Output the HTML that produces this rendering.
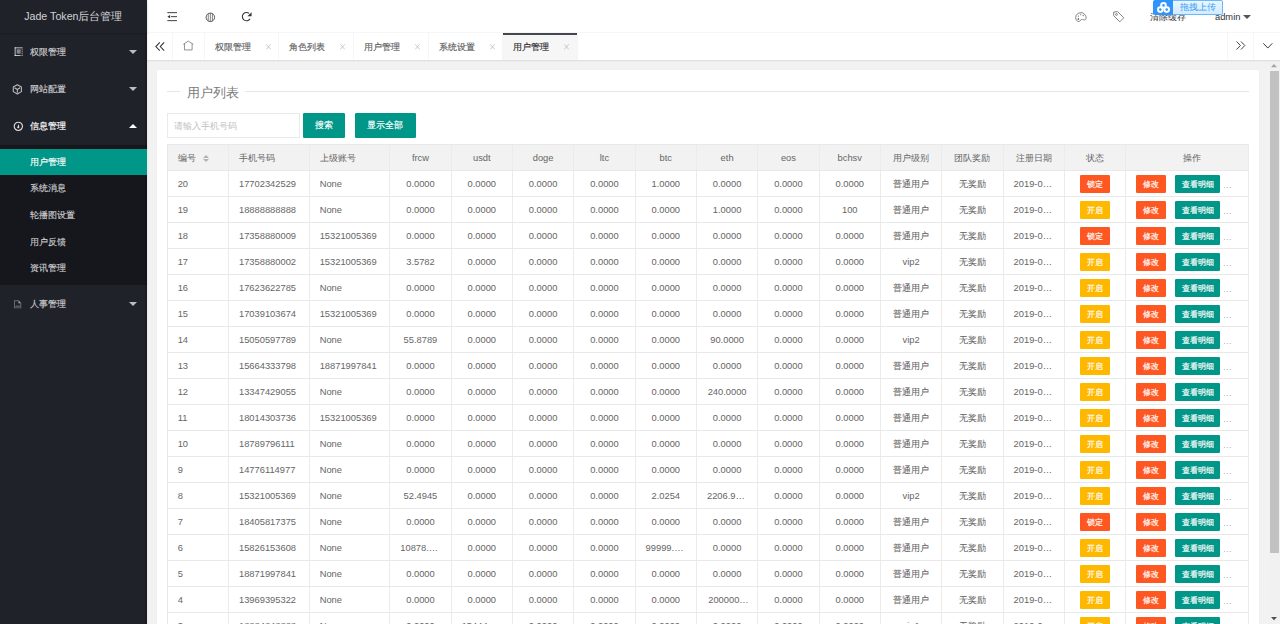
<!DOCTYPE html>
<html><head><meta charset="utf-8"><title>Jade Token后台管理</title>
<style>
html,body{margin:0;padding:0;overflow:hidden;background:#f2f2f2;width:1280px;height:624px}
#app{position:relative;width:1920px;height:936px;zoom:0.6666667;font-family:"Liberation Sans",sans-serif;font-size:14px;color:#666;overflow:hidden;background:#f2f2f2}
*{box-sizing:border-box}
svg{display:block;overflow:visible}
.nav,.ttl li,.lbtn,.btn,.cj{-webkit-text-stroke:0.25px currentColor}
td .cj{-webkit-text-stroke:0.12px currentColor}
.side{position:absolute;left:0;top:0;width:220px;height:936px;background:#20222A;box-shadow:1px 0 2px 0 rgba(0,0,0,.05);z-index:10}
.logo{position:absolute;left:0;top:0;width:220px;height:50px;line-height:50px;text-align:center;color:rgba(255,255,255,.8);font-size:16px;box-shadow:0 1px 2px 0 rgba(0,0,0,.15);background:#20222A;z-index:2}
.nav{position:absolute;left:0;top:50px;width:220px}
.nav .it{position:relative;display:block;height:56px;line-height:40px;padding:8px 30px 8px 45px;color:rgba(255,255,255,.7);white-space:nowrap}
.nav .it.on{color:#fff}
.nav .ic{position:absolute;left:0;top:0;width:16px;height:16px}
.nav .more{position:absolute;right:15px;top:25px;width:0;height:0;border-left:6px solid transparent;border-right:6px solid transparent;border-top:6px solid rgba(255,255,255,.7)}
.nav .it.on .more{border-top:none;border-bottom:6px solid #fff;top:24.5px}
.child{padding:5px 0;background:rgba(0,0,0,.3)}
.child a{display:block;height:40px;line-height:40px;padding-left:45px;color:rgba(255,255,255,.7)}
.child a.sel{background:#009688;color:#fff}
.header{position:absolute;left:220px;top:0;right:0;height:50px;background:#fff;border-bottom:1px solid #f6f6f6}
.hi{position:absolute}
.htxt{position:absolute;top:1.5px;line-height:50px;color:#333;white-space:nowrap}
.caret{position:absolute;left:1645px;top:22px;width:0;height:0;border-left:6px solid transparent;border-right:6px solid transparent;border-top:6px solid #555}
.tabs{position:absolute;left:220px;top:50px;right:0;height:40px;background:#fff;box-shadow:0 1px 2px 0 rgba(0,0,0,.1);z-index:5}
.tctl{position:absolute;top:0;width:40px;height:40px;border-left:1px solid #f6f6f6}
.ttl{position:absolute;left:40px;top:0;height:40px;white-space:nowrap;font-size:0;margin:0;padding:0}
.ttl li{display:inline-block;position:relative;vertical-align:top;width:112px;height:40px;line-height:40px;padding:1.4px 0 0 15px;border-right:1px solid #f6f6f6;font-size:14px;color:#666;list-style:none}
.ttl li.home{width:47px}
.ttl li.act{background:#f6f6f6;color:#333}
.ttl li.act:after{content:'';position:absolute;left:0;top:0;width:100%;height:2px;background:#45474e}
.ttl li .x{position:absolute;left:91.5px;top:16.2px;width:7.5px;height:8.5px}
.body{position:absolute;left:220px;top:90px;right:0;bottom:0;background:#f2f2f2}
.sb{position:absolute;right:0;top:0;width:17px;bottom:0;background:#f1f1f1}
.thumb{position:absolute;left:2.3px;width:13px;top:16.5px;height:723.5px;background:#c1c1c1}
.card{position:absolute;left:15px;top:15px;width:1653px;height:900px;background:#fff;border-radius:2px;box-shadow:0 1px 2px 0 rgba(0,0,0,.05)}
.cbody{padding:10px 15px}
fieldset.ft{margin:10px 0 20px;padding:0;border:none;border-top:1px solid #e6e6e6}
fieldset.ft legend{margin-left:20px;padding:0 10px;font-size:20px;line-height:24px;font-weight:300;color:#7a7a7a}
.form{height:38px;font-size:0;white-space:nowrap}
.inp{display:inline-block;vertical-align:top;width:200px;height:38px;border:1px solid #eaeaea;background:#fff;font-size:14px;line-height:36px;padding-left:10px;color:#c2c2c2}
.lbtn{display:inline-block;vertical-align:top;height:38px;line-height:38px;padding:1px 0 0;text-align:center;background:#009688;color:#fff;font-size:14px;border-radius:2px}
table.t{margin-top:9.4px;border-collapse:collapse;table-layout:fixed;width:1623px;border:1px solid #e8e8e8}
table.t th,table.t td{height:39px;padding:3px 15px 0;border:1px solid #e8e8e8;border-right-color:#ebebeb;border-top:none;border-left:none;text-align:center;white-space:nowrap;overflow:hidden;text-overflow:ellipsis;font-weight:400;color:#666;font-size:14px;line-height:28px}
table.t th{background:#f2f2f2;position:relative}
table.t td.l,table.t th.l{text-align:left}
.btn{display:inline-block;vertical-align:middle;height:28px;line-height:28px;padding:2px 10px 0;font-size:12px;color:#fff;border-radius:2px}
.red{background:#FF5722}.yel{background:#FFB800}.grn{background:#009688}
td.op{text-align:left!important}
table.t td.bt{padding-top:0}
table.t td.op{padding-top:4px;color:#b0b0b0}
td.op .btn{position:relative;top:-2px}
td.op .grn{margin-left:14px}
.more{font-size:14px;color:#aaa;margin-left:4px;position:relative;top:1.5px;letter-spacing:1px}
.sort{position:absolute;left:53.5px;width:0;height:0;border-left:5.5px solid transparent;border-right:5.5px solid transparent}
.bdu{position:absolute;left:1153px;top:0;width:70px;height:15px;z-index:50}
</style></head>
<body><div id="app">
<div class="side"><div style="position:absolute;right:0;top:0;width:2.5px;height:936px;background:#1c1d24"></div>
  <div class="logo">Jade Token后台管理</div>
  <div class="nav">
    <a class="it">权限管理<span class="more"></span>
      <svg class="ic" style="left:21.2px;top:20px" width="16" height="16" viewBox="0 0 16 16" fill="rgba(255,255,255,.7)"><rect x="1" y="0.5" width="12" height="1.5"/><rect x="1" y="0.5" width="1.5" height="13"/><rect x="1" y="12" width="9" height="1.5"/><rect x="4" y="3.5" width="6" height="6.5" fill="rgba(255,255,255,.45)"/><rect x="11.5" y="3.5" width="1.5" height="1.5"/><rect x="11.5" y="6.5" width="1.5" height="1.5"/><rect x="11.5" y="9.5" width="1.5" height="1.5"/><rect x="11.5" y="12" width="1.5" height="1.5"/></svg>
    </a>
    <a class="it">网站配置<span class="more"></span>
      <svg class="ic" style="left:18.3px;top:19.6px" width="16" height="16" viewBox="-8 -8 16 16" fill="none" stroke="rgba(255,255,255,.7)" stroke-width="1.6" stroke-linejoin="round"><path d="M0 -6.9 L6.1 -3.5 L6.1 3.5 L0 6.9 L-6.1 3.5 L-6.1 -3.5 Z"/><path d="M-4.2 -2.3 L0 0.3 L4.2 -2.3 M0 0.3 V5.2"/></svg>
    </a>
    <a class="it on">信息管理<span class="more"></span>
      <svg class="ic" style="left:18.9px;top:19.7px" width="16" height="16" viewBox="-8 -8 16 16"><circle cx="0" cy="0" r="6.2" fill="none" stroke="rgba(255,255,255,.85)" stroke-width="1.7"/><path d="M0.9 -3.6 L1.4 1.2 A1.5 1.5 0 1 1 -1.3 0.6 Z" fill="rgba(255,255,255,.85)"/></svg>
    </a>
    <div class="child">
      <a class="sel">用户管理</a>
      <a>系统消息</a>
      <a>轮播图设置</a>
      <a>用户反馈</a>
      <a>资讯管理</a>
    </div>
    <a class="it">人事管理<span class="more"></span>
      <svg class="ic" style="left:20px;top:20px" width="16" height="16" viewBox="0 0 16 16" fill="rgba(255,255,255,.35)"><path d="M1.6 2 H8.5 L12.4 5.9 V14 H1.6 Z M3 3.4 V12.6 H11 V6.6 H7.8 V3.4 Z"/><rect x="3.6" y="10" width="6.8" height="1.6"/><path d="M8.8 2.8 L11.8 5.8 H8.8 Z"/></svg>
    </a>
  </div>
</div>
<div class="header">
  <svg class="hi" style="left:30px;top:17.5px" width="16" height="14" viewBox="0 0 16 14" fill="#333"><rect x="0.5" y="0.3" width="14.5" height="1.4"/><rect x="0.5" y="12.3" width="14.5" height="1.4"/><rect x="5.8" y="6.3" width="9.2" height="1.4"/><path d="M0.6 7 L4.6 4.6 V9.4 Z"/></svg>
  <svg class="hi" style="left:86.8px;top:17.6px" width="16" height="16" viewBox="-8 -8 16 16" fill="none" stroke="#444" stroke-width="1.35"><circle r="6.4"/><path d="M-3.1 -5.3 V5.3 M0 -6.2 V6.2 M3.1 -5.3 V5.3" stroke-width="1"/></svg>
  <svg class="hi" style="left:143px;top:17.5px" width="16" height="16" viewBox="0 0 16 16" fill="none" stroke="#333" stroke-width="1.6"><path d="M10.7 2.2 A6.2 6.2 0 1 0 12.1 10.05"/><path d="M14.4 0.2 V6.4 H8.2 Z" fill="#333" stroke="none"/></svg>
  <svg class="hi" style="left:1393px;top:17.5px" width="18" height="16" viewBox="0 0 18 16" fill="none" stroke="#666" stroke-width="1.2"><path d="M9 1 C4.5 1 1 4.2 1 8.2 C1 12.5 3.6 14.3 5.6 14.3 C7.8 14.3 7.6 11.8 9.6 11.2 C11.8 10.6 13.8 12.8 15.6 11.5 C17.2 10.3 16.9 7.5 16 5.6 C14.8 2.9 12 1 9 1 Z"/><circle cx="5" cy="10.6" r="1.2" fill="#222" stroke="none"/><circle cx="5" cy="6.3" r="0.9" fill="#777" stroke="none"/><circle cx="8.6" cy="4" r="0.9" fill="#777" stroke="none"/><circle cx="12.4" cy="5.2" r="1" fill="#777" stroke="none"/></svg>
  <svg class="hi" style="left:1449px;top:16px" width="18" height="18" viewBox="0 0 18 18" fill="none" stroke="#666" stroke-width="1.2" stroke-linejoin="round"><path d="M1 1.5 L7 1 L16.2 10.2 L10.2 16.2 L1 7 Z"/><circle cx="5.2" cy="5.2" r="1.4"/></svg>
  <span class="htxt" style="left:1505.5px">清除缓存</span>
  <span class="htxt" style="left:1602.5px">admin</span>
  <span class="caret"></span>
</div>
<div class="tabs">
  <div class="tctl" style="left:0;border-left:none;border-right:1px solid #f6f6f6">
    <svg class="hi" style="left:12px;top:12.5px" width="16" height="14" viewBox="0 0 16 14" fill="none" stroke="#333" stroke-width="1.55"><path d="M7.2 0.7 L1.3 6.8 L7.2 12.9 M13.8 0.7 L7.9 6.8 L13.8 12.9"/></svg>
  </div>
  <ul class="ttl">
    <li class="home"><svg class="hi" style="left:15px;top:12px" width="16" height="14" viewBox="0 0 16 14" fill="none" stroke="#777" stroke-width="1.2" stroke-linejoin="round"><path d="M0.5 5 L7.9 0.1 L15.4 5 M2.2 4 V13.4 H13.7 V4"/></svg></li><li>权限管理<svg class="x" viewBox="0 0 8 9" fill="none" stroke="#b8b8b8" stroke-width="1.2"><path d="M0.5 0.5 L7.5 8.5 M7.5 0.5 L0.5 8.5"/></svg></li><li>角色列表<svg class="x" viewBox="0 0 8 9" fill="none" stroke="#b8b8b8" stroke-width="1.2"><path d="M0.5 0.5 L7.5 8.5 M7.5 0.5 L0.5 8.5"/></svg></li><li>用户管理<svg class="x" viewBox="0 0 8 9" fill="none" stroke="#b8b8b8" stroke-width="1.2"><path d="M0.5 0.5 L7.5 8.5 M7.5 0.5 L0.5 8.5"/></svg></li><li>系统设置<svg class="x" viewBox="0 0 8 9" fill="none" stroke="#b8b8b8" stroke-width="1.2"><path d="M0.5 0.5 L7.5 8.5 M7.5 0.5 L0.5 8.5"/></svg></li><li class="act">用户管理<svg class="x" viewBox="0 0 8 9" fill="none" stroke="#b8b8b8" stroke-width="1.2"><path d="M0.5 0.5 L7.5 8.5 M7.5 0.5 L0.5 8.5"/></svg></li>
  </ul>
  <div class="tctl" style="right:40px">
    <svg class="hi" style="left:13px;top:12px" width="16" height="14" viewBox="0 0 16 14" fill="none" stroke="#444" stroke-width="1.5"><path d="M0.8 0.7 L6.7 6.8 L0.8 12.9 M7.4 0.7 L13.3 6.8 L7.4 12.9"/></svg>
  </div>
  <div class="tctl" style="right:0">
    <svg class="hi" style="left:13px;top:14.5px" width="16" height="10" viewBox="0 0 16 10" fill="none" stroke="#333" stroke-width="1.45"><path d="M0.5 0.5 L7.2 7.6 L14 0.5"/></svg>
  </div>
</div>
<div class="body">
  <div class="card"><div class="cbody">
    <fieldset class="ft"><legend><span style="position:relative;top:2px">用户列表</span></legend></fieldset>
    <div class="form"><span class="inp">请输入手机号码</span><span class="lbtn" style="margin-left:4.4px;width:63px">搜索</span><span class="lbtn" style="margin-left:14.8px;width:91.4px">显示全部</span></div>
    <table class="t">
      <colgroup><col style="width:92px"><col style="width:121px"><col style="width:121px"><col style="width:92px"><col style="width:92px"><col style="width:92px"><col style="width:92px"><col style="width:92px"><col style="width:92px"><col style="width:92px"><col style="width:92px"><col style="width:92px"><col style="width:92px"><col style="width:92px"><col style="width:92px"><col></colgroup>
      <tr><th class="l" style="position:relative">编号<span class="sort" style="top:14.5px;border-bottom:5.5px solid #b2b2b2"></span><span class="sort" style="top:21.3px;border-top:5.5px solid #b2b2b2"></span></th><th class="l">手机号码</th><th class="l">上级账号</th><th>frcw</th><th>usdt</th><th>doge</th><th>ltc</th><th>btc</th><th>eth</th><th>eos</th><th>bchsv</th><th>用户级别</th><th>团队奖励</th><th>注册日期</th><th>状态</th><th style="padding-left:31.5px;padding-right:15px">操作</th></tr>
<tr><td class="l">20</td><td class="l">17702342529</td><td class="l">None</td><td>0.0000</td><td>0.0000</td><td>0.0000</td><td>0.0000</td><td>1.0000</td><td>0.0000</td><td>0.0000</td><td>0.0000</td><td><span class="cj">普通用户</span></td><td><span class="cj">无奖励</span></td><td>2019-04-16 10:32:18</td><td class="bt"><span class="btn red">锁定</span></td><td class="op bt"><span class="btn red">修改</span><span class="btn grn">查看明细</span> <span class="btn red">删除</span></td></tr>
<tr><td class="l">19</td><td class="l">18888888888</td><td class="l">None</td><td>0.0000</td><td>0.0000</td><td>0.0000</td><td>0.0000</td><td>0.0000</td><td>1.0000</td><td>0.0000</td><td>100</td><td><span class="cj">普通用户</span></td><td><span class="cj">无奖励</span></td><td>2019-04-16 10:32:18</td><td class="bt"><span class="btn yel">开启</span></td><td class="op bt"><span class="btn red">修改</span><span class="btn grn">查看明细</span> <span class="btn red">删除</span></td></tr>
<tr><td class="l">18</td><td class="l">17358880009</td><td class="l">15321005369</td><td>0.0000</td><td>0.0000</td><td>0.0000</td><td>0.0000</td><td>0.0000</td><td>0.0000</td><td>0.0000</td><td>0.0000</td><td><span class="cj">普通用户</span></td><td><span class="cj">无奖励</span></td><td>2019-04-16 10:32:18</td><td class="bt"><span class="btn red">锁定</span></td><td class="op bt"><span class="btn red">修改</span><span class="btn grn">查看明细</span> <span class="btn red">删除</span></td></tr>
<tr><td class="l">17</td><td class="l">17358880002</td><td class="l">15321005369</td><td>3.5782</td><td>0.0000</td><td>0.0000</td><td>0.0000</td><td>0.0000</td><td>0.0000</td><td>0.0000</td><td>0.0000</td><td>vip2</td><td><span class="cj">无奖励</span></td><td>2019-04-16 10:32:18</td><td class="bt"><span class="btn yel">开启</span></td><td class="op bt"><span class="btn red">修改</span><span class="btn grn">查看明细</span> <span class="btn red">删除</span></td></tr>
<tr><td class="l">16</td><td class="l">17623622785</td><td class="l">None</td><td>0.0000</td><td>0.0000</td><td>0.0000</td><td>0.0000</td><td>0.0000</td><td>0.0000</td><td>0.0000</td><td>0.0000</td><td><span class="cj">普通用户</span></td><td><span class="cj">无奖励</span></td><td>2019-04-16 10:32:18</td><td class="bt"><span class="btn yel">开启</span></td><td class="op bt"><span class="btn red">修改</span><span class="btn grn">查看明细</span> <span class="btn red">删除</span></td></tr>
<tr><td class="l">15</td><td class="l">17039103674</td><td class="l">15321005369</td><td>0.0000</td><td>0.0000</td><td>0.0000</td><td>0.0000</td><td>0.0000</td><td>0.0000</td><td>0.0000</td><td>0.0000</td><td><span class="cj">普通用户</span></td><td><span class="cj">无奖励</span></td><td>2019-04-16 10:32:18</td><td class="bt"><span class="btn yel">开启</span></td><td class="op bt"><span class="btn red">修改</span><span class="btn grn">查看明细</span> <span class="btn red">删除</span></td></tr>
<tr><td class="l">14</td><td class="l">15050597789</td><td class="l">None</td><td>55.8789</td><td>0.0000</td><td>0.0000</td><td>0.0000</td><td>0.0000</td><td>90.0000</td><td>0.0000</td><td>0.0000</td><td>vip2</td><td><span class="cj">无奖励</span></td><td>2019-04-16 10:32:18</td><td class="bt"><span class="btn yel">开启</span></td><td class="op bt"><span class="btn red">修改</span><span class="btn grn">查看明细</span> <span class="btn red">删除</span></td></tr>
<tr><td class="l">13</td><td class="l">15664333798</td><td class="l">18871997841</td><td>0.0000</td><td>0.0000</td><td>0.0000</td><td>0.0000</td><td>0.0000</td><td>0.0000</td><td>0.0000</td><td>0.0000</td><td><span class="cj">普通用户</span></td><td><span class="cj">无奖励</span></td><td>2019-04-16 10:32:18</td><td class="bt"><span class="btn yel">开启</span></td><td class="op bt"><span class="btn red">修改</span><span class="btn grn">查看明细</span> <span class="btn red">删除</span></td></tr>
<tr><td class="l">12</td><td class="l">13347429055</td><td class="l">None</td><td>0.0000</td><td>0.0000</td><td>0.0000</td><td>0.0000</td><td>0.0000</td><td>240.0000</td><td>0.0000</td><td>0.0000</td><td><span class="cj">普通用户</span></td><td><span class="cj">无奖励</span></td><td>2019-04-16 10:32:18</td><td class="bt"><span class="btn yel">开启</span></td><td class="op bt"><span class="btn red">修改</span><span class="btn grn">查看明细</span> <span class="btn red">删除</span></td></tr>
<tr><td class="l">11</td><td class="l">18014303736</td><td class="l">15321005369</td><td>0.0000</td><td>0.0000</td><td>0.0000</td><td>0.0000</td><td>0.0000</td><td>0.0000</td><td>0.0000</td><td>0.0000</td><td><span class="cj">普通用户</span></td><td><span class="cj">无奖励</span></td><td>2019-04-16 10:32:18</td><td class="bt"><span class="btn yel">开启</span></td><td class="op bt"><span class="btn red">修改</span><span class="btn grn">查看明细</span> <span class="btn red">删除</span></td></tr>
<tr><td class="l">10</td><td class="l">18789796111</td><td class="l">None</td><td>0.0000</td><td>0.0000</td><td>0.0000</td><td>0.0000</td><td>0.0000</td><td>0.0000</td><td>0.0000</td><td>0.0000</td><td><span class="cj">普通用户</span></td><td><span class="cj">无奖励</span></td><td>2019-04-16 10:32:18</td><td class="bt"><span class="btn yel">开启</span></td><td class="op bt"><span class="btn red">修改</span><span class="btn grn">查看明细</span> <span class="btn red">删除</span></td></tr>
<tr><td class="l">9</td><td class="l">14776114977</td><td class="l">None</td><td>0.0000</td><td>0.0000</td><td>0.0000</td><td>0.0000</td><td>0.0000</td><td>0.0000</td><td>0.0000</td><td>0.0000</td><td><span class="cj">普通用户</span></td><td><span class="cj">无奖励</span></td><td>2019-04-16 10:32:18</td><td class="bt"><span class="btn yel">开启</span></td><td class="op bt"><span class="btn red">修改</span><span class="btn grn">查看明细</span> <span class="btn red">删除</span></td></tr>
<tr><td class="l">8</td><td class="l">15321005369</td><td class="l">None</td><td>52.4945</td><td>0.0000</td><td>0.0000</td><td>0.0000</td><td>2.0254</td><td>2206.9800</td><td>0.0000</td><td>0.0000</td><td>vip2</td><td><span class="cj">无奖励</span></td><td>2019-04-16 10:32:18</td><td class="bt"><span class="btn yel">开启</span></td><td class="op bt"><span class="btn red">修改</span><span class="btn grn">查看明细</span> <span class="btn red">删除</span></td></tr>
<tr><td class="l">7</td><td class="l">18405817375</td><td class="l">None</td><td>0.0000</td><td>0.0000</td><td>0.0000</td><td>0.0000</td><td>0.0000</td><td>0.0000</td><td>0.0000</td><td>0.0000</td><td><span class="cj">普通用户</span></td><td><span class="cj">无奖励</span></td><td>2019-04-16 10:32:18</td><td class="bt"><span class="btn red">锁定</span></td><td class="op bt"><span class="btn red">修改</span><span class="btn grn">查看明细</span> <span class="btn red">删除</span></td></tr>
<tr><td class="l">6</td><td class="l">15826153608</td><td class="l">None</td><td>10878.3200</td><td>0.0000</td><td>0.0000</td><td>0.0000</td><td>99999.0000</td><td>0.0000</td><td>0.0000</td><td>0.0000</td><td><span class="cj">普通用户</span></td><td><span class="cj">无奖励</span></td><td>2019-04-16 10:32:18</td><td class="bt"><span class="btn yel">开启</span></td><td class="op bt"><span class="btn red">修改</span><span class="btn grn">查看明细</span> <span class="btn red">删除</span></td></tr>
<tr><td class="l">5</td><td class="l">18871997841</td><td class="l">None</td><td>0.0000</td><td>0.0000</td><td>0.0000</td><td>0.0000</td><td>0.0000</td><td>0.0000</td><td>0.0000</td><td>0.0000</td><td><span class="cj">普通用户</span></td><td><span class="cj">无奖励</span></td><td>2019-04-16 10:32:18</td><td class="bt"><span class="btn yel">开启</span></td><td class="op bt"><span class="btn red">修改</span><span class="btn grn">查看明细</span> <span class="btn red">删除</span></td></tr>
<tr><td class="l">4</td><td class="l">13969395322</td><td class="l">None</td><td>0.0000</td><td>0.0000</td><td>0.0000</td><td>0.0000</td><td>0.0000</td><td style="padding-right:11px">200000…</td><td>0.0000</td><td>0.0000</td><td><span class="cj">普通用户</span></td><td><span class="cj">无奖励</span></td><td>2019-04-16 10:32:18</td><td class="bt"><span class="btn yel">开启</span></td><td class="op bt"><span class="btn red">修改</span><span class="btn grn">查看明细</span> <span class="btn red">删除</span></td></tr>
<tr><td class="l">3</td><td class="l">18884848888</td><td class="l">None</td><td>0.0000</td><td>15444.0000</td><td>0.0000</td><td>0.0000</td><td>0.0000</td><td>0.0000</td><td>0.0000</td><td>0.0000</td><td>vip1</td><td><span class="cj">无奖励</span></td><td>2019-04-16 10:32:18</td><td class="bt"><span class="btn yel">开启</span></td><td class="op bt"><span class="btn red">修改</span><span class="btn grn">查看明细</span> <span class="btn red">删除</span></td></tr>
    </table>
  </div></div>
  <div class="sb"><svg style="position:absolute;left:4px;top:6px" width="9" height="5" viewBox="0 0 9 5"><path d="M0 5 L4.5 0 L9 5 Z" fill="#a3a3a3"/></svg><div class="thumb"></div><svg style="position:absolute;left:4px;bottom:6px" width="9" height="5" viewBox="0 0 9 5"><path d="M0 0 L4.5 5 L9 0 Z" fill="#505050"/></svg></div>
</div>
</div>
<div class="bdu">
  <div style="position:absolute;left:0;top:0;width:20px;height:15px;background:#2e96fb;border-radius:2px 0 0 2px"></div>
  <svg style="position:absolute;left:3.5px;top:2px" width="13" height="11" viewBox="0 0 13 11" fill="none" stroke="#fff" stroke-width="2"><circle cx="6.5" cy="3.4" r="2.3"/><circle cx="3.3" cy="7.6" r="2.3"/><circle cx="9.7" cy="7.6" r="2.3"/></svg>
  <div style="position:absolute;left:20px;top:0;width:50px;height:15px;background:linear-gradient(#e9f6ff,#d2ecff);border:1px solid #6ab8fb;border-left:none;border-radius:0 2px 2px 0;font-size:8.5px;line-height:13px;color:#3a9cf5;text-align:center;font-family:'Liberation Sans',sans-serif">拖拽上传</div>
</div>
</body></html>
